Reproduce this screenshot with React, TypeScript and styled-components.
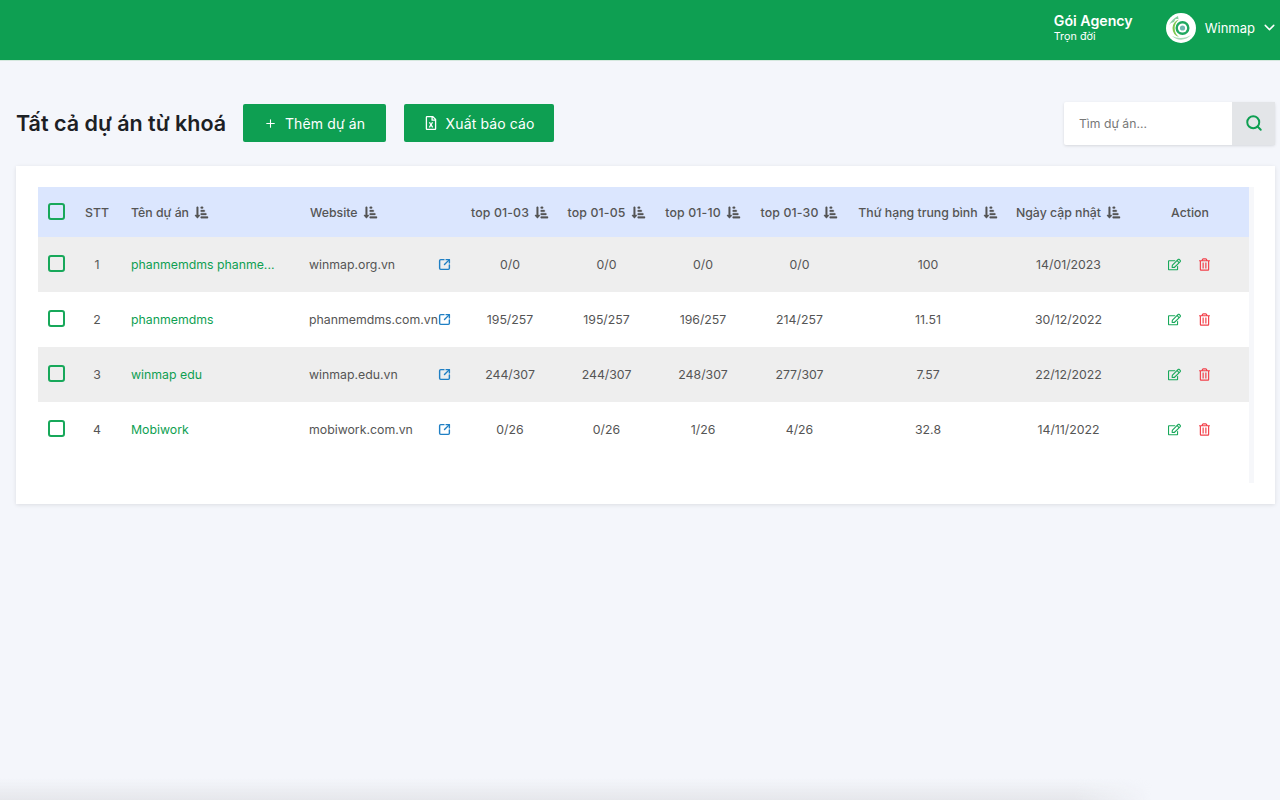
import React from "react";
import styled, { createGlobalStyle } from "styled-components";
import { FaRegEdit, FaRegTrashAlt, FaSortAmountDownAlt, FaRegFileExcel } from "react-icons/fa";
import { FiChevronDown, FiPlus } from "react-icons/fi";
import { LuSearch, LuSquareArrowOutUpRight } from "react-icons/lu";

const Global = createGlobalStyle`
  html, body { margin: 0; padding: 0; height: 100%; overflow: hidden; }
  body { background: #f4f6fb; font-family: Inter, "Liberation Sans", sans-serif; color: #555; }
  * { box-sizing: border-box; }
`;

const Page = styled.div`
  height: 800px;
  position: relative;
`;

const BottomFade = styled.div`
  position: absolute;
  left: 0;
  right: 0;
  bottom: 0;
  height: 22px;
  pointer-events: none;
  background: linear-gradient(to bottom, rgba(225, 226, 230, 0), rgba(225, 226, 230, 0.75));
  mask-image: linear-gradient(to right, #000 84%, transparent 90%);
`;

const Header = styled.header`
  height: 61px;
  background: #0e9f52;
  border-bottom: 1px solid #d5e8de;
  display: flex;
  justify-content: flex-end;
  align-items: center;
  color: #fff;
  padding: 0 2px 5px 0;
`;

const Plan = styled.div`
  display: flex;
  flex-direction: column;
  margin-right: 33px;
`;

const PlanName = styled.span`
  font-size: 14.2px;
  font-weight: 600;
  line-height: 17px;
`;

const PlanTerm = styled.span`
  font-size: 10.8px;
  line-height: 15px;
`;

const Avatar = styled.svg`
  width: 30px;
  height: 30px;
  margin-right: 9px;
`;

const UserName = styled.span`
  font-size: 13px;
  line-height: 20px;
  margin-right: 6px;
`;

const Toolbar = styled.section`
  display: flex;
  align-items: center;
  padding: 19px 5px 0 16px;
  height: 105px;
`;

const Title = styled.h1`
  margin: 0 17px 0 0;
  font-size: 21.5px;
  line-height: 30px;
  font-weight: 600;
  color: #1c2024;
`;

const ActionButton = styled.button<{ $w: number; $mr?: number }>`
  width: ${(p) => p.$w}px;
  height: 38px;
  margin-right: ${(p) => p.$mr ?? 0}px;
  border: 0;
  border-radius: 2px;
  background: #0e9f52;
  color: #fff;
  font-family: inherit;
  font-size: 14px;
  letter-spacing: 0.12px;
  display: flex;
  align-items: center;
  justify-content: center;
  gap: 8px;
`;

const Search = styled.div`
  margin-left: auto;
  width: 211px;
  height: 43px;
  display: flex;
  border-radius: 2px;
  box-shadow: 0 1px 3px rgba(0, 0, 0, 0.12);
  background: #fff;
`;

const SearchInput = styled.div`
  flex: 1;
  padding-left: 15px;
  font-size: 12.2px;
  color: #777;
  display: flex;
  align-items: center;
`;

const SearchButton = styled.div`
  width: 43px;
  background: #e3e5e8;
  color: #0e9f52;
  display: flex;
  align-items: center;
  justify-content: center;
`;

const Card = styled.section`
  position: relative;
  margin: 0 5px 0 16px;
  height: 338px;
  background: #fff;
  padding: 21px 26px 0 22px;
  box-shadow: 0 1px 4px rgba(0, 0, 0, 0.1);
`;

const ScrollTrack = styled.div`
  position: absolute;
  top: 21px;
  left: 1233px;
  width: 5px;
  height: 296px;
  background: #f6f7fa;
`;

const columns = "38px 42px 179px 165px 96px 97px 96px 97px 160px 121px 120px";

const HeadRow = styled.div`
  display: grid;
  grid-template-columns: ${columns};
  height: 50px;
  background: #dbe6fe;
  align-items: center;
`;

const Row = styled.div<{ $shaded: boolean }>`
  display: grid;
  grid-template-columns: ${columns};
  height: 55px;
  align-items: center;
  background: ${(p) => (p.$shaded ? "#eeeeee" : "#fff")};
`;

const HeadCell = styled.div<{ $left?: boolean; $wide?: boolean }>`
  display: flex;
  align-items: center;
  justify-content: ${(p) => (p.$left ? "flex-start" : "center")};
  padding-left: ${(p) => (p.$left ? "13px" : "0")};
  gap: 5px;
  font-size: 12.3px;
  font-weight: 500;
  letter-spacing: ${(p) => (p.$wide ? "0.15px" : "0")};
  color: #555;
  white-space: nowrap;
`;

const ActionHead = styled(HeadCell)`
  padding-left: 2px;
`;

const Cell = styled.div<{ $left?: boolean }>`
  display: flex;
  align-items: center;
  justify-content: ${(p) => (p.$left ? "flex-start" : "center")};
  padding-left: ${(p) => (p.$left ? "13px" : "0")};
  font-size: 12.3px;
  color: #555;
  white-space: nowrap;
`;

const ProjectName = styled.span`
  color: #0e9f52;
`;

const SiteCell = styled(Cell)`
  justify-content: space-between;
  padding: 0 11px 0 12px;
`;

const SiteLink = styled.span`
  color: #1f7fc4;
  display: flex;
`;

const Check = styled.span`
  width: 17px;
  height: 17px;
  border: 2px solid #17a85a;
  border-radius: 3px;
  display: block;
  margin: 0 1px 2px 0;
`;

const ActionCell = styled(Cell)`
  gap: 18px;
`;

const EditIcon = styled(FaRegEdit)`
  color: #17a85a;
  width: 13px;
  height: 13px;
`;

const TrashIcon = styled(FaRegTrashAlt)`
  color: #f2404a;
  width: 11px;
  height: 13px;
`;

const SortIcon = styled(FaSortAmountDownAlt)`
  width: 15px;
  height: 13px;
  color: #555;
  stroke: currentColor;
  stroke-width: 14px;
`;

const rows = [
  ["1", "phanmemdms phanme...", "winmap.org.vn", "0/0", "0/0", "0/0", "0/0", "100", "14/01/2023"],
  ["2", "phanmemdms", "phanmemdms.com.vn", "195/257", "195/257", "196/257", "214/257", "11.51", "30/12/2022"],
  ["3", "winmap edu", "winmap.edu.vn", "244/307", "244/307", "248/307", "277/307", "7.57", "22/12/2022"],
  ["4", "Mobiwork", "mobiwork.com.vn", "0/26", "0/26", "1/26", "4/26", "32.8", "14/11/2022"],
];

const heads = ["top 01-03", "top 01-05", "top 01-10", "top 01-30", "Thứ hạng trung bình", "Ngày cập nhật"];

function Logo() {
  return (
    <Avatar viewBox="0 0 30 30" aria-hidden="true">
      <circle cx="15" cy="15" r="15" fill="#fff" />
      <path d="M3 12 C5 8 8 5 12 3 L12.5 6 L9.5 6 L8 9 L5 10 Z" fill="#86cf9e" />
      <path d="M6 23 C11 28 20 28 25 22 C20 25.5 12 26 6 23 Z" fill="#a6dcb6" />
      <path d="M6.5 15 A9.5 9.5 0 0 1 13 6.5 A11 11 0 0 0 13 24 A9.5 9.5 0 0 1 6.5 15 Z" fill="#7ec850" />
      <circle cx="16.5" cy="15" r="7" fill="#1fa860" />
      <circle cx="16.5" cy="15" r="4.6" fill="#fff" />
      <circle cx="16.5" cy="15" r="2.6" fill="#6fb7b0" />
    </Avatar>
  );
}

export default function App() {
  return (
    <Page>
      <Global />
      <Header>
        <Plan>
          <PlanName>Gói Agency</PlanName>
          <PlanTerm>Trọn đời</PlanTerm>
        </Plan>
        <Logo />
        <UserName>Winmap</UserName>
        <FiChevronDown size={17} />
      </Header>
      <Toolbar>
        <Title>Tất cả dự án từ khoá</Title>
        <ActionButton $w={143} $mr={18}>
          <FiPlus size={13} />
          <span>Thêm dự án</span>
        </ActionButton>
        <ActionButton $w={150}>
          <FaRegFileExcel size={14} />
          <span>Xuất báo cáo</span>
        </ActionButton>
        <Search>
          <SearchInput>Tìm dự án...</SearchInput>
          <SearchButton>
            <LuSearch size={18} strokeWidth={2.6} />
          </SearchButton>
        </Search>
      </Toolbar>
      <Card>
        <HeadRow>
          <Cell><Check /></Cell>
          <HeadCell>STT</HeadCell>
          <HeadCell $left>Tên dự án <SortIcon /></HeadCell>
          <HeadCell $left>Website <SortIcon /></HeadCell>
          {heads.map((h) => (
            <HeadCell key={h} $wide={h.startsWith("top")}>{h} <SortIcon /></HeadCell>
          ))}
          <ActionHead>Action</ActionHead>
        </HeadRow>
        {rows.map((r, i) => (
          <Row key={r[0]} $shaded={i % 2 === 0}>
            <Cell><Check /></Cell>
            <Cell>{r[0]}</Cell>
            <Cell $left><ProjectName>{r[1]}</ProjectName></Cell>
            <SiteCell>
              <span>{r[2]}</span>
              <SiteLink><LuSquareArrowOutUpRight size={13} strokeWidth={2.6} /></SiteLink>
            </SiteCell>
            {r.slice(3).map((v, j) => (
              <Cell key={j}>{v}</Cell>
            ))}
            <ActionCell>
              <EditIcon />
              <TrashIcon />
            </ActionCell>
          </Row>
        ))}
        <ScrollTrack />
      </Card>
      <BottomFade />
    </Page>
  );
}
